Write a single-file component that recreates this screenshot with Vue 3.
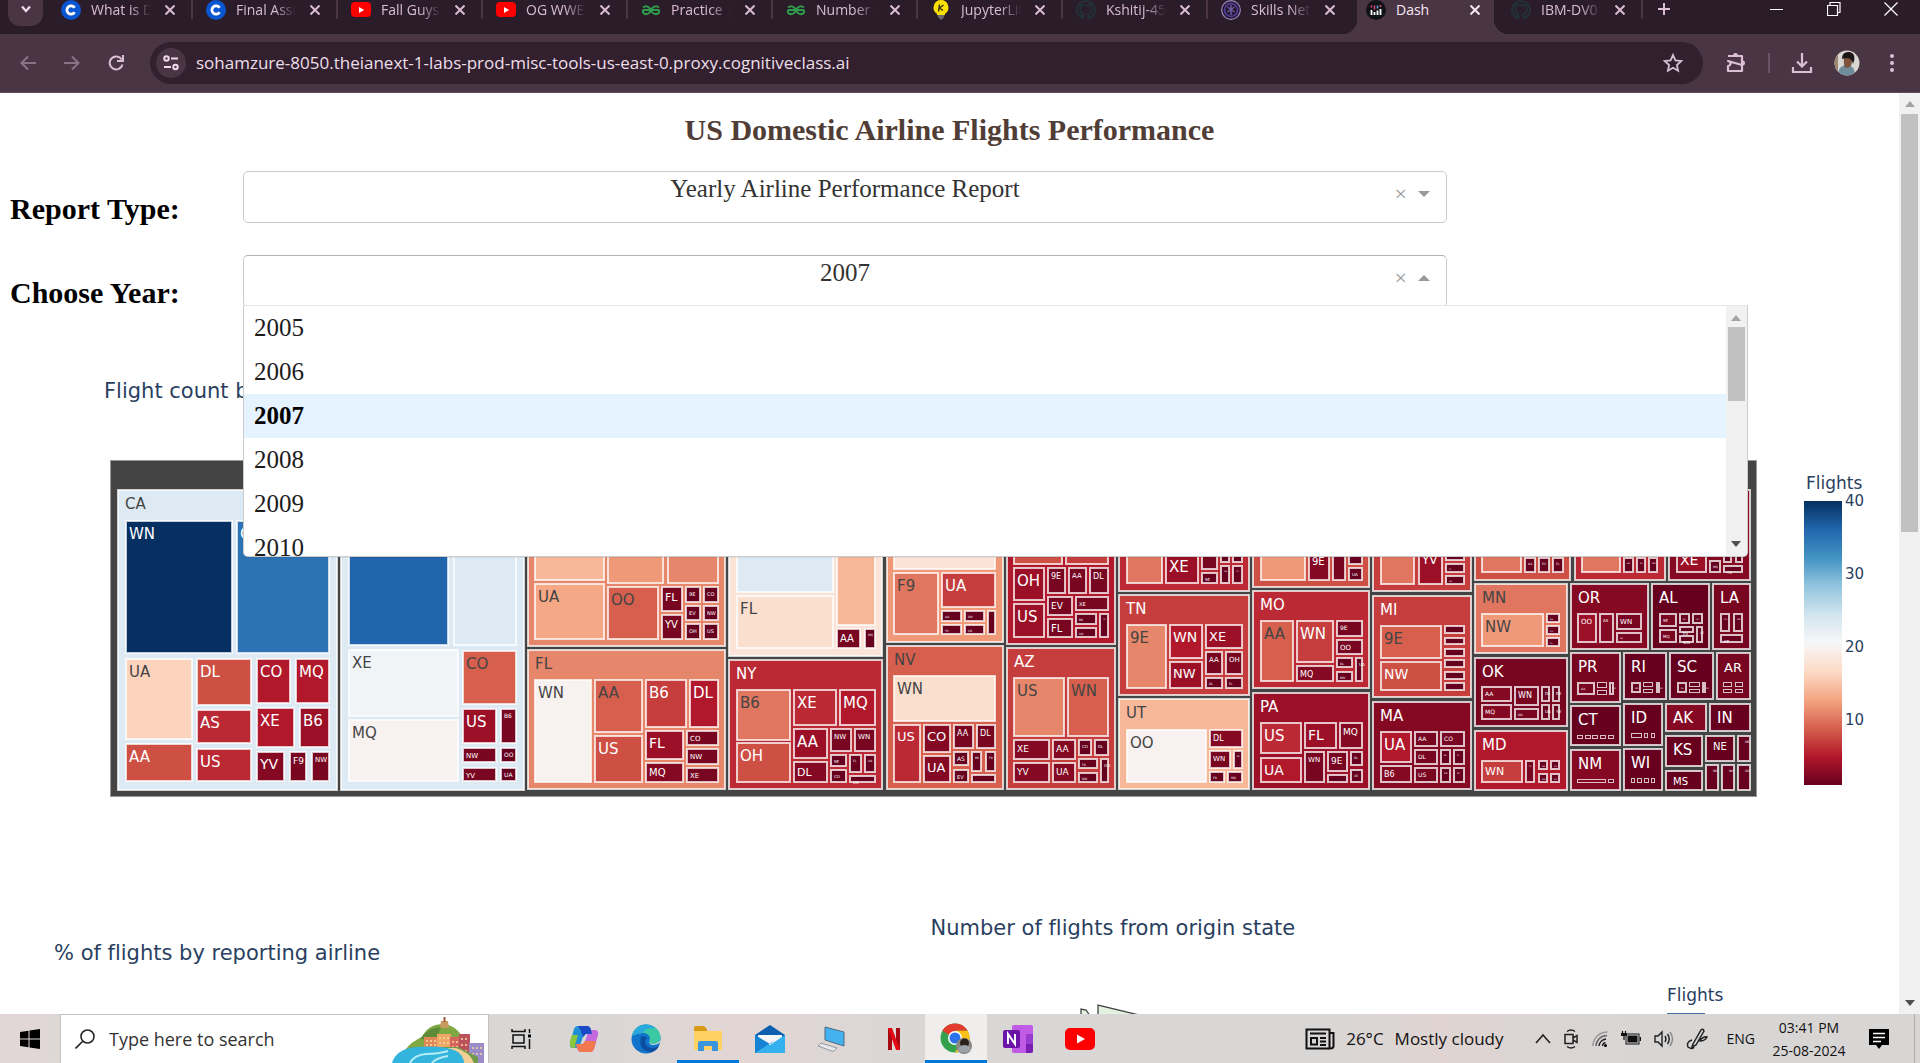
<script setup>
import { ref } from 'vue'

const tabs = [
  { title: 'What is Dash', icon: 'coursera' },
  { title: 'Final Assign', icon: 'coursera' },
  { title: 'Fall Guys -', icon: 'youtube' },
  { title: 'OG WWE', icon: 'youtube' },
  { title: 'Practice |', icon: 'gfg' },
  { title: 'Number of', icon: 'gfg' },
  { title: 'JupyterLite', icon: 'bulb' },
  { title: 'Kshitij-45', icon: 'github' },
  { title: 'Skills Net', icon: 'skills' },
  { title: 'Dash', icon: 'dash', active: true },
  { title: 'IBM-DV01', icon: 'github' }
]

const reportType = ref('Yearly Airline Performance Report')
const year = ref(2007)
const years = [2005, 2006, 2007, 2008, 2009, 2010]

const ticks = [40, 30, 20, 10]

const palette = {
  a: '#67001f', b: '#780621', c: '#850923', d: '#9c1027', e: '#b1182b', f: '#bb2a34',
  g: '#c53e3d', h: '#ce5045', i: '#d6604d', j: '#e0765f', k: '#e6866a', l: '#ef9979',
  m: '#f5a885', n: '#f7b799', o: '#fcd3bc', p: '#fbdfce', q: '#fbe3d7', r: '#f7f2f0',
  s: '#f0f4f6', t: '#deeaf3', u: '#2d73b3', v: '#2166ac', w: '#053061'
}
const isDark = (c) => 'ijklmnopqrst'.includes(c)

// State: [left, top, right, bottom, colour, label, airlines, label size]
// Airline: [left, top, right, bottom, colour, label, label size]
const states = [
  [117, 489, 338, 791, 't', 'CA', [
    [125, 520, 233, 654, 'w', 'WN'], [236, 520, 330, 654, 'u', 'OO'],
    [125, 658, 193, 740, 'o', 'UA'], [125, 743, 193, 782, 'h', 'AA'],
    [196, 658, 252, 706, 'h', 'DL'], [196, 709, 252, 744, 'f', 'AS'], [196, 748, 252, 782, 'f', 'US'],
    [256, 658, 291, 704, 'e', 'CO'], [295, 658, 330, 704, 'e', 'MQ'],
    [256, 707, 295, 748, 'e', 'XE'], [299, 707, 330, 748, 'd', 'B6'],
    [256, 751, 285, 782, 'c', 'YV', 14], [289, 751, 307, 782, 'b', 'F9', 9], [311, 751, 330, 782, 'b', 'NW', 7]]],
  [340, 489, 525, 791, 't', '', [
    [348, 520, 449, 646, 'v'], [453, 520, 517, 646, 't'],
    [348, 649, 459, 717, 's', 'XE'], [348, 719, 459, 782, 'r', 'MQ'],
    [462, 650, 517, 705, 'i', 'CO'], [462, 708, 497, 744, 'd', 'US'], [500, 708, 517, 744, 'b', 'B6', 6],
    [462, 747, 497, 763, 'b', 'NW', 7], [500, 747, 517, 763, 'a', 'OO', 6],
    [462, 767, 497, 782, 'b', 'YV', 7], [500, 767, 517, 782, 'a', 'UA', 6]]],
  [527, 489, 726, 647, 'k', '', [
    [534, 520, 605, 581, 'n'], [607, 520, 664, 584, 'l'], [667, 520, 719, 584, 'k'],
    [534, 583, 605, 640, 'm', 'UA'], [607, 586, 659, 640, 'i', 'OO'],
    [661, 586, 683, 612, 'b', 'FL', 11], [661, 614, 683, 640, 'b', 'YV', 10],
    [685, 586, 701, 603, 'a', '9E', 5], [703, 586, 719, 603, 'a', 'CO', 5],
    [685, 605, 701, 621, 'a', 'EV', 5], [703, 605, 719, 621, 'a', 'NW', 5],
    [685, 623, 701, 640, 'a', 'OH', 5], [703, 623, 719, 640, 'a', 'US', 5]]],
  [527, 649, 726, 790, 'k', 'FL', [
    [534, 679, 592, 783, 'r', 'WN'], [594, 679, 643, 733, 'i', 'AA'], [594, 735, 643, 783, 'h', 'US'],
    [645, 679, 687, 728, 'g', 'B6'], [689, 679, 719, 728, 'e', 'DL'],
    [645, 730, 684, 760, 'd', 'FL', 14], [645, 762, 684, 783, 'c', 'MQ', 10],
    [686, 730, 719, 746, 'b', 'CO', 7], [686, 748, 719, 765, 'b', 'NW', 7], [686, 767, 719, 783, 'b', 'XE', 7]]],
  [728, 489, 883, 657, 'q', '', [
    [736, 520, 834, 593, 't'], [836, 520, 876, 626, 'n'], [736, 595, 834, 649, 'p', 'FL'],
    [836, 628, 861, 649, 'b', 'AA', 10], [864, 628, 876, 649, 'a', 'MQ', 3]]],
  [728, 659, 883, 790, 'f', 'NY', [
    [736, 689, 791, 741, 'j', 'B6'], [736, 742, 791, 783, 'h', 'OH'],
    [793, 689, 837, 726, 'f', 'XE'], [839, 689, 876, 726, 'e', 'MQ'],
    [793, 728, 828, 759, 'd', 'AA'], [793, 761, 828, 783, 'c', 'DL', 11],
    [830, 728, 852, 752, 'b', 'NW', 7], [854, 728, 876, 752, 'b', 'WN', 7],
    [830, 754, 847, 767, 'a', '9E', 4], [830, 769, 847, 783, 'a', 'CO', 4],
    [849, 754, 862, 773, 'a', 'FL', 3], [864, 754, 876, 773, 'a', 'UA', 3], [849, 775, 876, 783, 'a', 'US', 4]]],
  [886, 489, 1004, 643, 'l', '', [
    [893, 520, 996, 570, 'q'], [893, 572, 939, 635, 'j', 'F9'], [941, 572, 996, 608, 'g', 'UA'],
    [941, 610, 962, 622, 'a', 'AA', 3], [964, 610, 985, 622, 'a', 'OO', 3], [987, 610, 996, 635, 'a'],
    [941, 624, 962, 635, 'a', 'YV', 3], [964, 624, 985, 635, 'a', 'US', 3]]],
  [886, 645, 1004, 790, 'i', 'NV', [
    [893, 675, 996, 722, 'p', 'WN'], [893, 724, 921, 783, 'f', 'US', 13],
    [923, 724, 951, 753, 'c', 'CO', 13], [923, 755, 951, 783, 'c', 'UA', 13],
    [953, 724, 974, 749, 'b', 'AA', 8], [976, 724, 996, 749, 'b', 'DL', 8],
    [953, 751, 969, 766, 'a', 'AS', 6], [953, 769, 969, 783, 'a', 'EV', 5],
    [971, 751, 982, 772, 'a', 'B6', 3], [985, 751, 996, 772, 'a', 'F9', 3], [971, 774, 996, 783, 'a']]],
  [1006, 489, 1116, 645, 'e', '', [
    [1013, 520, 1063, 565, 'h'], [1065, 520, 1109, 565, 'g'],
    [1013, 567, 1045, 601, 'd', 'OH'], [1013, 603, 1045, 638, 'd', 'US'],
    [1047, 567, 1066, 594, 'b', '9E', 8], [1068, 567, 1087, 594, 'b', 'AA', 7], [1089, 567, 1109, 594, 'b', 'DL', 8],
    [1047, 596, 1073, 616, 'b', 'EV', 9], [1047, 618, 1073, 638, 'b', 'FL', 10],
    [1075, 596, 1109, 611, 'b', 'XE', 5], [1075, 613, 1097, 625, 'a', 'B6', 3],
    [1075, 627, 1097, 638, 'a', 'UA', 3], [1099, 613, 1109, 638, 'a', 'YV', 2]]],
  [1006, 647, 1116, 790, 'g', 'AZ', [
    [1013, 677, 1065, 737, 'k', 'US'], [1067, 677, 1109, 737, 'i', 'WN'],
    [1013, 739, 1050, 760, 'c', 'XE', 9], [1013, 762, 1050, 783, 'c', 'YV', 9],
    [1052, 739, 1076, 760, 'c', 'AA', 9], [1052, 762, 1076, 783, 'c', 'UA', 9],
    [1078, 739, 1092, 756, 'a', 'CO', 4], [1094, 739, 1109, 756, 'a', 'DL', 4],
    [1078, 758, 1098, 769, 'a', 'F9', 3], [1078, 772, 1098, 783, 'a', 'NW', 3], [1100, 758, 1109, 783, 'a', 'OO', 4]]],
  [1118, 489, 1250, 592, 'f', '', [
    [1126, 520, 1163, 584, 'j'], [1165, 553, 1199, 584, 'd', 'XE'],
    [1201, 540, 1218, 570, 'b'], [1201, 572, 1218, 584, 'a', '9E', 4],
    [1220, 540, 1230, 563, 'a'], [1232, 540, 1243, 563, 'a'],
    [1220, 565, 1230, 584, 'a', 'UA', 2], [1232, 565, 1243, 584, 'a', 'YV', 2]]],
  [1118, 594, 1250, 696, 'g', 'TN', [
    [1126, 624, 1167, 689, 'k', '9E'], [1169, 624, 1203, 659, 'e', 'WN', 14], [1169, 661, 1203, 689, 'd', 'NW', 13],
    [1205, 624, 1243, 649, 'd', 'XE', 13], [1205, 651, 1223, 675, 'b', 'AA', 7], [1225, 651, 1243, 675, 'b', 'OH', 7],
    [1205, 677, 1223, 689, 'a', 'DL', 3], [1225, 677, 1243, 689, 'a', 'FL', 3]]],
  [1118, 698, 1250, 790, 'n', 'UT', [
    [1126, 729, 1207, 783, 'r', 'OO'], [1209, 729, 1243, 748, 'c', 'DL', 8],
    [1209, 750, 1231, 769, 'b', 'WN', 7], [1233, 750, 1243, 769, 'a', 'B6', 2],
    [1209, 771, 1225, 783, 'a', 'F9', 3], [1227, 771, 1243, 783, 'a', 'MQ', 3]]],
  [1252, 489, 1370, 588, 'h', '', [
    [1260, 520, 1306, 581, 'l'], [1308, 551, 1330, 581, 'c', '9E', 10], [1332, 540, 1346, 581, 'b'],
    [1348, 540, 1363, 565, 'a'], [1348, 567, 1363, 581, 'a', 'UA', 4]]],
  [1252, 590, 1370, 689, 'f', 'MO', [
    [1260, 620, 1294, 682, 'i', 'AA'], [1296, 620, 1334, 663, 'g', 'WN'], [1296, 665, 1334, 682, 'c', 'MQ', 8],
    [1336, 620, 1363, 637, 'b', '9E', 6], [1336, 639, 1363, 655, 'b', 'OO', 7],
    [1336, 657, 1353, 668, 'a', 'DL', 3], [1336, 671, 1353, 682, 'a', 'NW', 3], [1355, 657, 1363, 682, 'a', 'UA', 4]]],
  [1252, 692, 1370, 790, 'd', 'PA', [
    [1260, 722, 1302, 754, 'f', 'US'], [1260, 757, 1302, 783, 'e', 'UA', 14],
    [1304, 722, 1337, 749, 'd', 'FL', 14], [1339, 722, 1363, 749, 'c', 'MQ', 9],
    [1304, 751, 1325, 783, 'b', 'WN', 7], [1327, 751, 1348, 772, 'b', '9E', 9], [1327, 774, 1348, 783, 'a'],
    [1350, 751, 1363, 766, 'a', 'DL', 3], [1350, 769, 1363, 783, 'a', 'XE', 3]]],
  [1372, 489, 1472, 592, 'g', '', [
    [1380, 520, 1415, 585, 'j'], [1418, 548, 1443, 585, 'd', 'YV', 12],
    [1445, 545, 1465, 561, 'a'], [1445, 563, 1465, 573, 'a', 'FL', 2], [1445, 575, 1465, 585, 'a', 'UA', 2]]],
  [1372, 595, 1472, 698, 'g', 'MI', [
    [1380, 625, 1442, 659, 'i', '9E'], [1380, 661, 1442, 691, 'h', 'NW', 14],
    [1444, 625, 1465, 634, 'a'], [1444, 637, 1465, 645, 'a'], [1444, 648, 1465, 657, 'a'],
    [1444, 659, 1465, 668, 'a'], [1444, 671, 1465, 680, 'a'], [1444, 682, 1465, 691, 'a']]],
  [1372, 701, 1472, 790, 'c', 'MA', [
    [1380, 731, 1412, 763, 'e', 'UA'], [1380, 765, 1412, 783, 'c', 'B6', 8],
    [1414, 731, 1438, 747, 'b', 'AA', 6], [1440, 731, 1465, 747, 'b', 'CO', 6],
    [1414, 749, 1438, 765, 'b', 'DL', 6], [1440, 749, 1451, 765, 'a', 'B6', 2], [1453, 749, 1465, 765, 'a', 'FL', 2],
    [1414, 767, 1438, 783, 'b', 'US', 6], [1440, 767, 1451, 783, 'a', 'NW', 2], [1453, 767, 1465, 783, 'a', 'XE', 2]]],
  [1474, 489, 1571, 581, 'h', '', [
    [1481, 520, 1522, 573, 'j'], [1524, 557, 1536, 573, 'a', 'AA', 3], [1538, 557, 1550, 573, 'a', 'EV', 3], [1552, 557, 1564, 573, 'a', 'FL', 3]]],
  [1574, 489, 1666, 581, 'f', '', [
    [1581, 520, 1621, 573, 'j'], [1623, 557, 1634, 573, 'a', 'AA', 2], [1636, 557, 1646, 573, 'a', 'DL', 2], [1648, 557, 1658, 573, 'a', 'WN', 2]]],
  [1668, 489, 1751, 581, 'c', '', [
    [1676, 547, 1707, 573, 'd', 'XE', 14], [1709, 560, 1721, 573, 'a', 'MQ', 3],
    [1723, 550, 1732, 563, 'a'], [1735, 550, 1743, 563, 'a'], [1723, 565, 1743, 573, 'a', 'YV', 4]]],
  [1474, 583, 1568, 654, 'j', 'MN', [
    [1481, 613, 1544, 647, 'l', 'NW'], [1546, 613, 1560, 623, 'a', 'AA', 2],
    [1546, 625, 1560, 635, 'a', 'CO', 2], [1546, 637, 1560, 647, 'a', 'FL', 2]]],
  [1570, 583, 1649, 650, 'c', 'OR', [
    [1577, 613, 1597, 643, 'd', 'OO', 7], [1599, 613, 1614, 643, 'c', 'AS', 4],
    [1616, 613, 1642, 630, 'b', 'WN', 7], [1616, 632, 1642, 643, 'b', 'UA', 2]]],
  [1651, 583, 1710, 650, 'a', 'AL', [
    [1659, 613, 1677, 627, 'b', '9E', 4], [1659, 629, 1677, 643, 'b', 'MQ', 4],
    [1679, 613, 1690, 624, 'a', 'DL', 2], [1692, 613, 1703, 624, 'a', 'OH', 2],
    [1679, 626, 1694, 633, 'a', 'EV', 4], [1679, 635, 1694, 643, 'a', 'WN', 4], [1696, 626, 1703, 643, 'a', 'XE', 3]]],
  [1712, 583, 1751, 650, 'b', 'LA', [
    [1720, 613, 1730, 632, 'a', 'CO', 2], [1733, 613, 1743, 632, 'a', 'WN', 2], [1720, 634, 1743, 643, 'a', 'XE', 4]]],
  [1474, 657, 1568, 727, 'b', 'OK', [
    [1481, 686, 1512, 702, 'c', 'AA', 6], [1481, 704, 1512, 720, 'c', 'MQ', 6],
    [1514, 686, 1539, 706, 'b', 'WN', 8], [1514, 708, 1539, 720, 'b', 'OO', 3],
    [1541, 686, 1550, 702, 'a', 'DL', 4], [1552, 686, 1560, 702, 'a', 'EV', 4],
    [1541, 704, 1550, 720, 'a', 'UA', 4], [1552, 704, 1560, 720, 'a', 'YV', 4]]],
  [1474, 730, 1568, 791, 'e', 'MD', [
    [1481, 760, 1523, 783, 'g', 'WN', 11], [1525, 760, 1535, 783, 'b', 'FL', 2],
    [1538, 760, 1548, 770, 'a', 'AA', 2], [1550, 760, 1560, 770, 'a', 'CO', 2],
    [1538, 773, 1548, 783, 'a', 'NW', 2], [1550, 773, 1560, 783, 'a', 'US', 2]]],
  [1570, 652, 1621, 703, 'b', 'PR', [
    [1577, 682, 1595, 695, 'b', 'AA', 3], [1597, 682, 1607, 688, 'a'], [1597, 690, 1607, 695, 'a'], [1609, 682, 1614, 695, 'a', 'US', 2]]],
  [1623, 652, 1667, 700, 'a', 'RI', [
    [1631, 682, 1641, 693, 'a', 'WN', 2], [1643, 682, 1653, 687, 'a'], [1643, 689, 1653, 693, 'a'], [1656, 682, 1660, 693, 'a', 'US', 2]]],
  [1669, 652, 1714, 700, 'a', 'SC', [
    [1677, 682, 1687, 693, 'a', 'DL', 2], [1689, 682, 1700, 687, 'a'], [1689, 689, 1700, 693, 'a'], [1702, 682, 1706, 693, 'a', 'US', 2]]],
  [1716, 652, 1751, 700, 'b', 'AR', [
    [1723, 682, 1732, 687, 'a'], [1735, 682, 1743, 687, 'a'], [1723, 689, 1732, 693, 'a'], [1735, 689, 1743, 693, 'a']], 13],
  [1570, 705, 1621, 746, 'a', 'CT', [
    [1577, 735, 1583, 739, 'a'], [1585, 735, 1591, 739, 'a'], [1592, 735, 1598, 739, 'a'], [1600, 735, 1606, 739, 'a'], [1608, 735, 1614, 739, 'a']]],
  [1570, 749, 1621, 791, 'c', 'NM', [[1577, 779, 1606, 783, 'c'], [1608, 779, 1614, 783, 'a']]],
  [1623, 703, 1663, 746, 'a', 'ID', [[1631, 733, 1642, 738, 'a'], [1644, 733, 1648, 738, 'a'], [1651, 733, 1655, 738, 'a']]],
  [1623, 748, 1663, 791, 'a', 'WI', [
    [1631, 778, 1635, 783, 'a'], [1637, 778, 1642, 783, 'a'], [1644, 778, 1649, 783, 'a'], [1651, 778, 1655, 783, 'a']]],
  [1665, 703, 1707, 732, 'c', 'AK', []],
  [1709, 703, 1751, 732, 'a', 'IN', []],
  [1665, 735, 1703, 767, 'a', 'KS', []],
  [1665, 770, 1703, 791, 'a', 'MS', [], 10],
  [1705, 735, 1735, 762, 'a', 'NE', [], 10],
  [1737, 735, 1751, 762, 'a', 'ME', [], 3],
  [1705, 764, 1719, 791, 'a', 'ND', [], 3],
  [1721, 764, 1735, 791, 'a', 'NH', [], 3],
  [1737, 764, 1751, 791, 'a', 'SD', [], 3]
]

function tile(r, depth) {
  const size = (depth ? r[6] : r[7]) || 15
  const line = r[3] - r[1] < 7 ? 1 : 2
  return {
    x: r[0] + line / 2, y: r[1] + line / 2, w: r[2] - r[0] - line, h: r[3] - r[1] - line, line,
    fill: palette[r[4]], label: r[5], size, dark: isDark(r[4]),
    tx: r[0] + (depth ? 4 : 8),
    ty: r[1] + (depth ? 5 + size * 0.9 : size > 10 ? 20 : 5 + size)
  }
}
const tiles = states.flatMap((s) => [tile(s, 0), ...s[6].map((c) => tile(c, 1))])
</script>

<template>
  <div class="screen">
    <header class="tabstrip">
      <button class="tab-search" aria-label="Search tabs">
        <svg width="12" height="8" viewBox="0 0 12 8"><path d="M2 1.500 6 6l4-4.500" fill="none" stroke="#f0dcec" stroke-width="2.200" /></svg>
      </button>
      <div class="tabs">
        <div v-for="(t, i) in tabs" :key="i" class="tab" :class="{ active: t.active, before: i === 8 }">
          <svg class="favicon" width="20" height="20" viewBox="0 0 20 20">
            <template v-if="t.icon === 'coursera'">
              <circle cx="10" cy="10" r="10" fill="#0a56d1" />
              <path d="M13.600 7.700A4.200 4.200 0 1 0 13.600 12.300" fill="none" stroke="#fff" stroke-width="2.800" />
            </template>
            <template v-else-if="t.icon === 'youtube'">
              <rect x="0" y="2" width="20" height="15" rx="4" fill="#f00" />
              <path d="M8 7v6l5.200-3z" fill="#fff" />
            </template>
            <template v-else-if="t.icon === 'gfg'">
              <g fill="none" stroke="#2f9b4c" stroke-width="2">
                <path d="M2 7.500Q5 5 8 7.500T8 13Q4.500 15.500 2 12.500 1.500 10 3 10H17Q18.500 10 18 12.500 15.500 15.500 12 13T12 7.500Q15 5 18 7.500" />
              </g>
            </template>
            <template v-else-if="t.icon === 'bulb'">
              <path d="M10 0a7.500 7.500 0 0 0-4 13.800V15h8v-1.200A7.500 7.500 0 0 0 10 0z" fill="#fbe100" />
              <path d="M6.500 15h7l-1 3-2.500 2-2.500-2z" fill="#6a6a6a" />
              <path d="M8.500 4.500l-1 7M12.500 5l-4 3 3.500 2.500" fill="none" stroke="#3b3415" stroke-width="1.500" />
            </template>
            <template v-else-if="t.icon === 'github'">
              <path d="M10 1a9 9 0 0 0-3 17.500c.5 0 .6-.2.600-.5V16c-3 .5-3.500-1.500-3.500-1.500M12.800 18.500c-.3 0-.4-.2-.4-.5v-2.500c0-.8-.3-1.400-.6-1.600 2-.3 4-1 4-4.500 0-1-.3-1.800-.9-2.400.1-.3.400-1.200-.1-2.500 0 0-.8-.2-2.500 1a8 8 0 0 0-4.600 0C6 4.300 5.200 4.500 5.200 4.500c-.5 1.300-.2 2.200-.1 2.500A9 9 0 0 0 4.200 9.400c0 3.500 2 4.200 4 4.500M10 1a9 9 0 0 1 3 17.500" fill="none" stroke="#233036" stroke-width="2" />
            </template>
            <template v-else-if="t.icon === 'skills'">
              <circle cx="10" cy="10" r="9.300" fill="#241a2e" stroke="#9a86c0" stroke-width="1.200" />
              <circle cx="10" cy="10" r="6.500" fill="none" stroke="#5b3fa6" stroke-width="1.400" />
              <path d="M10 5v10M6.500 7l7 5M13.500 7l-7 5" stroke="#6f5aa6" stroke-width="1.400" />
            </template>
            <template v-else>
              <circle cx="10" cy="10" r="10" fill="#111316" />
              <path d="M5.500 10v5M8.500 12v3M11.500 10.500v4.500M14.500 9v6" stroke="#fff" stroke-width="1.800" />
              <path d="M5.500 5.500v2M8.500 5.500v4M14.500 5v2" stroke="#d64a7c" stroke-width="1.500" />
              <path d="M11.500 5.500v3" stroke="#5aa9e0" stroke-width="1.500" />
            </template>
          </svg>
          <span class="tab-title">{{ t.title }}</span>
          <button class="tab-close" :aria-label="'Close ' + t.title">
            <svg width="10" height="10" viewBox="0 0 10 10"><path d="M.5.500l9 9M9.500.500l-9 9" stroke="currentColor" stroke-width="2" /></svg>
          </button>
        </div>
      </div>
      <button class="new-tab" aria-label="New tab">
        <svg width="14" height="14" viewBox="0 0 14 14"><path d="M7 1v12M1 7h12" stroke="#dcbfd5" stroke-width="2" /></svg>
      </button>
      <div class="window-buttons">
        <button aria-label="Minimize"><svg width="14" height="14" viewBox="0 0 14 14"><path d="M0 7.500h13" stroke="#fff" /></svg></button>
        <button aria-label="Restore"><svg width="14" height="14" viewBox="0 0 14 14"><path d="M.5 3.500h10v10H.5zM3 3.500V.5h10v10h-2.500" fill="none" stroke="#fff" stroke-width="1.200" /></svg></button>
        <button aria-label="Close"><svg width="14" height="14" viewBox="0 0 14 14"><path d="M.5.5l13 13M13.500.5l-13 13" stroke="#fff" stroke-width="1.200" /></svg></button>
      </div>
    </header>

    <nav class="toolbar">
      <button class="nav-button" aria-label="Back"><svg width="16" height="16" viewBox="0 0 16 16"><path d="M16 8H2M8 1.500 1.500 8 8 14.500" fill="none" stroke="#8b7386" stroke-width="2" /></svg></button>
      <button class="nav-button" aria-label="Forward"><svg width="16" height="16" viewBox="0 0 16 16"><path d="M0 8h14M8 1.500 14.500 8 8 14.500" fill="none" stroke="#8b7386" stroke-width="2" /></svg></button>
      <button class="nav-button" aria-label="Reload"><svg width="16" height="16" viewBox="0 0 16 16"><path d="M13.700 4.500A6.500 6.500 0 1 0 14.500 9.500M15 0v6H9" fill="none" stroke="#dcbfd5" stroke-width="2" /></svg></button>
      <div class="omnibox">
        <button class="site-info" aria-label="Site information">
          <svg width="16" height="16" viewBox="0 0 16 16"><g fill="none" stroke="#f0dcec" stroke-width="2"><circle cx="3.500" cy="3.500" r="2.200" /><path d="M8 3.500h7" /><circle cx="12.500" cy="12" r="2.200" /><path d="M1 12h7" /></g></svg>
        </button>
        <input class="url" type="text" aria-label="Address" value="sohamzure-8050.theianext-1-labs-prod-misc-tools-us-east-0.proxy.cognitiveclass.ai" />
        <button aria-label="Bookmark">
          <svg width="20" height="20" viewBox="0 0 20 20"><path d="M10 2l2.400 5.400 5.900.6-4.400 4 1.200 5.800L10 14.800l-5.100 3 1.200-5.800-4.400-4 5.900-.6z" fill="none" stroke="#d6bfd1" stroke-width="1.800" /></svg>
        </button>
      </div>
      <div class="toolbar-right">
        <button aria-label="Extensions">
          <svg width="22" height="22" viewBox="0 0 22 22"><path d="M3 4h14v5M17 13v6H3v-5q2.500-.5 2.500-2.500T3 9z" fill="none" stroke="#dcbfd5" stroke-width="2.200" stroke-linejoin="round" /><path d="M17 8v6" stroke="#dcbfd5" stroke-width="2.200" /><path d="M8 3.500a2.500 2.500 0 0 1 5 0zM17.500 8.500a2.500 2.500 0 0 1 0 5z" fill="#dcbfd5" /></svg>
        </button>
        <span class="toolbar-rule"></span>
        <button aria-label="Downloads">
          <svg width="22" height="22" viewBox="0 0 22 22"><path d="M11 1v13M6 9.500l5 5 5-5M2 15v5h18v-5" fill="none" stroke="#dcbfd5" stroke-width="2.200" /></svg>
        </button>
        <button aria-label="Profile">
          <svg width="26" height="26" viewBox="0 0 26 26">
            <clipPath id="face"><circle cx="13" cy="13" r="12.500" /></clipPath>
            <g clip-path="url(#face)">
              <rect width="26" height="26" fill="#d9d5d1" /><rect width="4" height="26" fill="#9c8672" />
              <path d="M4 26q0-11 9-11 8 0 8 11z" fill="#6f8c9c" />
              <path d="M10 8q8-3 8 3 0 6-5 7-4 0-3-10z" fill="#7d533c" /><path d="M8 9q0-8 8-7 7 2 3 12-1-5-5-6-3 0-6 1z" fill="#1c1715" />
            </g>
          </svg>
        </button>
        <button class="more" aria-label="Menu">
          <svg width="6" height="20" viewBox="0 0 6 20"><g fill="#dcbfd5"><circle cx="3" cy="3" r="2" /><circle cx="3" cy="10" r="2" /><circle cx="3" cy="17" r="2" /></g></svg>
        </button>
      </div>
    </nav>

    <div class="viewport">
      <main class="page">
        <h1>US Domestic Airline Flights Performance</h1>

        <div class="form">
          <div class="form-row">
            <label for="report-type">Report Type:</label>
            <div class="field">
              <div class="control">
                <select id="report-type" v-model="reportType">
                  <option>Yearly Airline Performance Report</option>
                </select>
                <div class="control-icons">
                  <button class="clear" aria-label="Clear report type">×</button>
                  <svg width="12" height="6" viewBox="0 0 12 6"><path d="M0 0h12L6 6z" fill="#999" /></svg>
                </div>
              </div>
            </div>
          </div>
          <div class="form-row">
            <label for="year">Choose Year:</label>
            <div class="field">
              <div class="control open">
                <select id="year" v-model="year">
                  <option v-for="y in years" :key="y" :value="y">{{ y }}</option>
                </select>
                <div class="control-icons">
                  <button class="clear" aria-label="Clear year">×</button>
                  <svg width="12" height="6" viewBox="0 0 12 6"><path d="M0 6h12L6 0z" fill="#999" /></svg>
                </div>
              </div>
              <div class="menu">
                <ul role="listbox" aria-label="Year">
                  <li v-for="y in years" :key="y" role="option" :aria-selected="y === year" :class="{ selected: y === year }">{{ y }}</li>
                </ul>
                <div class="scrollbar menu-scroll">
                  <svg width="10" height="6" viewBox="0 0 10 6"><path d="M0 6h10L5 0z" fill="#a3a3a3" /></svg>
                  <span class="thumb"></span>
                  <svg class="down" width="10" height="6" viewBox="0 0 10 6"><path d="M0 0h10L5 6z" fill="#505050" /></svg>
                </div>
              </div>
            </div>
          </div>
        </div>

        <section class="chart">
          <h2 class="treemap-title">Flight count by airline to destination state</h2>
          <div class="treemap-row">
            <svg class="treemap" viewBox="110 460 1647 337">
              <rect x="110.500" y="460.500" width="1646" height="336" fill="#444" stroke="#999" />
              <g v-for="(t, i) in tiles" :key="i">
                <rect :x="t.x" :y="t.y" :width="t.w" :height="t.h" :fill="t.fill" :stroke-width="t.line" class="tile" />
                <text v-if="t.label" :x="t.tx" :y="t.ty" :font-size="t.size" :class="t.dark ? 'on-light' : 'on-dark'">{{ t.label }}</text>
              </g>
            </svg>
            <div class="legend">
              <div class="legend-title">Flights</div>
              <div class="scale">
                <div class="bar"></div>
                <div class="ticks"><span v-for="t in ticks" :key="t">{{ t }}</span></div>
              </div>
            </div>
          </div>
        </section>

        <div class="lower">
          <section class="pie"><h2>% of flights by reporting airline</h2></section>
          <section class="map">
            <h2>Number of flights from origin state</h2>
            <div class="map-row">
              <svg class="shape" width="62" height="20" viewBox="0 0 62 20"><path d="M4 20V6l5 1 9 13M21 20V2l41 10v8" fill="#e2f2df" stroke="#444" stroke-width="1.300" /></svg>
              <div class="map-legend">
                <div class="legend-title">Flights</div>
                <div class="bar"></div>
              </div>
            </div>
          </section>
        </div>
      </main>
      <div class="scrollbar page-scroll">
        <svg width="10" height="6" viewBox="0 0 10 6"><path d="M0 6h10L5 0z" fill="#a3a3a3" /></svg>
        <span class="thumb"></span>
        <svg class="down" width="10" height="6" viewBox="0 0 10 6"><path d="M0 0h10L5 6z" fill="#505050" /></svg>
      </div>
    </div>

    <footer class="taskbar">
      <button class="start" aria-label="Start">
        <svg width="20" height="20" viewBox="0 0 20 20"><path d="M0 3l8.500-1.200v7.700H0zM9.500 1.600 20 0v9.500H9.500zM0 10.500h8.500v7.700L0 17zM9.500 10.500H20V20L9.500 18.400z" /></svg>
      </button>
      <div class="search">
        <svg width="20" height="20" viewBox="0 0 20 20"><circle cx="12.500" cy="7.500" r="6.500" fill="none" stroke="#222" stroke-width="1.600" /><path d="M8 12 .5 19.500" stroke="#222" stroke-width="1.600" /></svg>
        <input type="text" aria-label="Search" placeholder="Type here to search" />
        <svg class="art" width="92" height="46" viewBox="0 0 92 46">
          <path d="M12 34Q20 24 30 20q6-13 22-13 16 2 22 22l10 8z" fill="#7fa843" />
          <path d="M28 22q8-12 22-12-6 8-4 14z" fill="#5c8c38" />
          <path d="M49 4h7l1 7h-9z" fill="#c79a62" /><path d="M52.500 0v5" stroke="#a05a3a" stroke-width="2" />
          <rect x="32" y="20" width="16" height="12" fill="#e08855" /><rect x="45" y="17" width="14" height="15" fill="#f0a765" />
          <rect x="58" y="20" width="13" height="16" fill="#d4645c" /><rect x="67" y="17" width="11" height="24" fill="#b9525a" /><rect x="77" y="26" width="15" height="20" fill="#9a8cc8" />
          <path d="M34 24h12M34 28h12M47 21h10M47 26h10M60 25h8M60 30h8M69 22h8M69 28h8M69 34h8M80 31h10M80 37h10" stroke="#fbd9a0" stroke-width="1.500" stroke-dasharray="2 2" />
          <path d="M18 30h48l20 10v6H20z" fill="#6f9a4a" />
          <path d="M30 31h34q14 4 18 15H60z" fill="#f2cf95" />
          <path d="M0 46Q4 32 24 30q30-2 42 5 6 5 6 11z" fill="#33b4dc" /><path d="M18 46q4-8 16-9 12 0 22-3M40 46q4-5 16-7" stroke="#b6ecf6" stroke-width="2" fill="none" />
        </svg>
      </div>
      <div class="apps">
        <button aria-label="Task view"><svg width="22" height="20" viewBox="0 0 22 20"><path d="M1 0v2.500h13V0M2 6h11v8H2zM1 20v-2.500h13V20M18.500 0v4M18.500 10v10" fill="none" stroke="#111" stroke-width="1.500" /><rect x="17" y="5.500" width="3" height="3" /></svg></button>
        <button aria-label="Copilot">
          <svg width="30" height="28" viewBox="0 0 30 28">
            <path d="M9 1h9q3 0 4 4l1 4h-6q-2 0-3 3l-3 8q-1 3-4 3H4q-4 0-3-5L5 4q1-3 4-3z" fill="#1f8fd6" /><path d="M1 16l2-6h6l-3 10q2 3-2 3-4 0-3-7z" fill="#8cc63f" />
            <path d="M21 27h-9q-3 0-4-4l-1-4h6q2 0 3-3l3-8q1-3 4-3h3q4 0 3 5l-4 14q-1 3-4 3z" fill="#c567dd" /><path d="M8 23l-1-4h6q2 0 3-3h11l-2 8q-1 3-4 3h-9q-3 0-4-4z" fill="#f2794f" /><path d="M9 1h9q3 0 4 4l1 4h-6l-3 3-3-8z" fill="#1a49c8" />
          </svg>
        </button>
        <button aria-label="Edge">
          <svg width="30" height="30" viewBox="0 0 30 30"><circle cx="15" cy="15" r="14.500" fill="#1173c9" /><path d="M1 12Q4 0 15.500.5 29 2 29.500 14q-1 6-8 6-4 0-3-3 2-6-5-8Q6 8 1 12z" fill="#3bc9a4" /><path d="M1 12Q4 0 15.500.5q5 0 9 4-10-1-14 5-5 0-9.500 2.500z" fill="#2aa9dc" /><path d="M10 13q-3 13 9 15 6 0 9-6-7 4-12 0-4-4 0-8-3-3-6-1z" fill="#0b4ea0" /><path d="M18.500 17q-1 3 3 4 5 0 8-3v-2q-3 4-8 4-3 0-3-3z" fill="#dbd9d8" /></svg>
        </button>
        <button class="running" aria-label="File Explorer">
          <svg width="28" height="26" viewBox="0 0 28 26"><path d="M0 2q0-2 2-2h8l3 3v3H0z" fill="#d99a17" /><path d="M0 5h28v19H0z" fill="#ffd262" /><path d="M4 25v-8q0-2 2-2h16q2 0 2 2v8h-6v-5h-8v5z" fill="#3a95dc" /></svg>
        </button>
        <button aria-label="Mail"><svg width="30" height="28" viewBox="0 0 30 28"><path d="M0 10 15 0l15 10v4H0z" fill="#0b5fae" /><path d="M3 10h24v10H3z" fill="#f4f6f8" /><path d="M0 10l15 10 15-10v18H0z" fill="#35b0ee" /><path d="M0 10v18l20-13-5 4z" fill="#1583d2" /></svg></button>
        <button aria-label="This PC"><svg width="28" height="26" viewBox="0 0 28 26"><path d="M7 1l19 5v14L7 14z" fill="#44b2ef" stroke="#4f6b80" /><path d="M3 17l16 5-4 3.500L0 20z" fill="#e6e8ea" stroke="#7b858d" stroke-width=".8" /></svg></button>
        <button aria-label="Netflix"><svg width="12" height="22" viewBox="0 0 12 22"><path d="M0 0h4v22H0zM8 0h4v22H8z" fill="#a70a12" /><path d="M0 0h4l8 22H8z" fill="#e50914" /></svg></button>
        <button class="running current" aria-label="Chrome">
          <svg width="32" height="32" viewBox="0 0 32 32"><circle cx="15" cy="15" r="14.500" fill="#34a14c" /><path d="M2.400 7.700A14.500 14.500 0 0 1 27.600 7.700H15l-6 4z" fill="#e33b2e" /><path d="M27.600 7.700A14.500 14.500 0 0 1 15 29.500l6-11-6-10.800z" fill="#fbc116" /><circle cx="15" cy="15" r="7" fill="#fff" /><circle cx="15" cy="15" r="5.500" fill="#2b72e8" /><circle cx="24" cy="23" r="8" fill="#888783" /><circle cx="24.500" cy="20" r="4.500" fill="#2b211d" /><path d="M18 28q1-6 6-6t7 4q-5 6-13 2z" fill="#9ba3a6" /></svg>
        </button>
        <button aria-label="OneNote"><svg width="30" height="28" viewBox="0 0 30 28"><rect x="9" width="21" height="28" rx="2" fill="#c05be6" /><path d="M23 9h7v10h-7z" fill="#9a3bd0" /><path d="M23 19h7v7q0 2-2 2h-5z" fill="#7a1fb4" /><rect y="5" width="17" height="18" rx="2" fill="#6a14a8" /><path d="M5 19V9l7 10V9" stroke="#fff" stroke-width="2" fill="none" /></svg></button>
        <button aria-label="YouTube"><svg width="30" height="22" viewBox="0 0 30 22"><rect width="30" height="22" rx="5" fill="#f00" /><path d="M12 6.500v9l8-4.500z" fill="#fff" /></svg></button>
      </div>
      <div class="tray">
        <button class="weather">
          <svg width="30" height="22" viewBox="0 0 30 22"><path d="M1.500 1.500h23v19h-23zM25 5h3.500v13q0 2.500-3.500 2.500" fill="none" stroke="#111" stroke-width="2" /><path d="M5 5.500h16M15 10h6M15 13.500h6M15 17h6" stroke="#111" stroke-width="1.800" /><path d="M6 10h6v6.500H6z" fill="none" stroke="#111" stroke-width="2" /></svg>
          <span>26°C</span><span>Mostly cloudy</span>
        </button>
        <div class="tray-icons">
          <svg width="16" height="20" viewBox="0 0 16 20"><path d="M1 14l7-8 7 8" fill="none" stroke="#222" stroke-width="1.600" /></svg>
          <svg width="16" height="20" viewBox="0 0 16 20"><path d="M2 5.500h8v9H2zM10 9l4-2.500v7L10 11M4 2.500q4-3 8 0M4 17.500q4 3 8 0" fill="none" stroke="#222" stroke-width="1.500" /></svg>
          <svg width="16" height="20" viewBox="0 0 16 20"><g fill="none" stroke="#222" stroke-width="1.500"><path d="M10.500 17a4 4 0 0 1 3-3.500" /><path d="M7 17a8 8 0 0 1 7-7" /><path d="M4 17A11 11 0 0 1 15 6.500" stroke="#666" /><path d="M.8 17A14.500 14.500 0 0 1 15.500 3" stroke="#999" /></g><circle cx="13.500" cy="16.500" r="1.500" /></svg>
          <svg width="20" height="20" viewBox="0 0 20 20"><rect x="5" y="5" width="13" height="10" fill="none" stroke="#111" /><rect x="7" y="7" width="9" height="6" fill="#111" stroke="#111" /><path d="M19.500 8v4" stroke="#111" stroke-width="1.500" /><path d="M0 4h6v3H0z" fill="#111" /><path d="M1.500 2v3M4.500 2v3M3 6v5" stroke="#111" stroke-width="1.200" fill="none" /></svg>
          <svg width="20" height="20" viewBox="0 0 20 20"><path d="M1 7h3l4-4v14l-4-4H1zM11 7q2 3 0 6M13.500 5q3.500 5 0 10" fill="none" stroke="#222" stroke-width="1.400" /><path d="M16 3q5 7 0 14" fill="none" stroke="#888" stroke-width="1.400" /></svg>
          <svg width="22" height="22" viewBox="0 0 22 22"><path d="M7 16 15 2q2-2 3 1L10 17l-4 2zM6 12q-6 2-4 7 4 3 6 0M13 13q5-5 8-4-2 4-7 4" fill="none" stroke="#222" stroke-width="1.500" /></svg>
        </div>
        <span class="lang">ENG</span>
        <div class="clock"><span>03:41 PM</span><span>25-08-2024</span></div>
        <button class="notes" aria-label="Notifications">
          <svg width="20" height="20" viewBox="0 0 20 20"><path d="M0 0h20v16h-7l-3 4-3-4H0z" /><path d="M4 4.500h12M4 8.500h12M4 12.500h8" stroke="#fff" stroke-width="1.300" /></svg>
        </button>
      </div>
    </footer>
  </div>
</template>

<style>
body {
  margin: 0;
  overflow: hidden;
}
</style>

<style scoped>
* {
  box-sizing: border-box;
}
.screen {
  display: flex;
  flex-direction: column;
  height: 100vh;
  font-family: "Open Sans", "Noto Sans", sans-serif;
  background: #fff;
}
button {
  display: flex;
  align-items: center;
  justify-content: center;
  padding: 0;
  border: 0;
  background: none;
  color: inherit;
  font: inherit;
}
svg {
  display: block;
  flex: none;
}

/* tab strip */
.tabstrip {
  display: flex;
  flex: none;
  height: 34px;
  background: #2b1c29;
  color: #d9bcd3;
}
.tab-search {
  width: 35px;
  height: 26px;
  margin: 0 5px 0 8px;
  padding-bottom: 8px;
  border-radius: 0 0 12px 12px;
  background: #4a3545;
}
.tabs {
  display: flex;
}
.tab {
  position: relative;
  display: flex;
  align-items: center;
  width: 145px;
  height: 34px;
  padding: 0 18px 15px 13px;
}
.tab::after {
  content: "";
  position: absolute;
  top: 0;
  right: 0;
  width: 2px;
  height: 19px;
  background: #4a3545;
}
.tab.before::after {
  display: none;
}
.tab.active {
  width: 137px;
  margin: 0 4px;
  padding: 0 14px 15px 9px;
  background: #4a3545;
  color: #f6e8f2;
}
.tab.active::before,
.tab.active::after {
  content: "";
  position: absolute;
  top: 20px;
  width: 14px;
  height: 14px;
}
.tab.active::before {
  left: -14px;
  background: radial-gradient(circle at 0 0, #2b1c29 14px, #4a3545 14px);
}
.tab.active::after {
  right: -14px;
  background: radial-gradient(circle at 100% 0, #2b1c29 14px, #4a3545 14px);
}
.tab-title {
  flex: 1;
  margin: 0 14px 0 10px;
  overflow: hidden;
  white-space: nowrap;
  font-size: 14px;
  line-height: 20px;
  mask-image: linear-gradient(90deg, #000 65%, transparent);
}
.tab.active .tab-title {
  mask-image: none;
}
.new-tab {
  height: 18px;
  margin-left: 14px;
}
.window-buttons {
  display: flex;
  align-items: center;
  gap: 43px;
  height: 18px;
  margin-left: auto;
  margin-right: 22px;
}

/* toolbar */
.toolbar {
  display: flex;
  flex: none;
  align-items: center;
  height: 59px;
  padding-left: 6px;
  background: #4a3545;
  border-bottom: 1px solid #5f4b5a;
}
.nav-button {
  width: 44px;
  height: 40px;
}
.omnibox {
  display: flex;
  flex: 1;
  align-items: center;
  height: 42px;
  margin-left: 12px;
  padding: 0 20px 0 6px;
  border-radius: 21px;
  background: #33202f;
}
.site-info {
  width: 30px;
  height: 30px;
  border-radius: 15px;
  background: #4a3545;
}
.url {
  flex: 1;
  margin-left: 10px;
  padding: 0;
  border: 0;
  outline: 0;
  background: none;
  color: #eddfe9;
  font: 17px/24px "Open Sans", "Noto Sans", sans-serif;
}
.toolbar-right {
  display: flex;
  align-items: center;
  gap: 21px;
  margin-left: 22px;
  margin-right: 25px;
}
.more {
  margin-left: 8px;
}
.toolbar-rule {
  width: 2px;
  height: 20px;
  background: #6b5265;
}

/* scrollbars */
.scrollbar {
  display: flex;
  flex: none;
  flex-direction: column;
  align-items: center;
  width: 21px;
  background: #f1f1f1;
}
.thumb {
  width: 17px;
  background: #c1c1c1;
}
.down {
  margin-top: auto;
}
.page-scroll {
  padding: 8px 0;
}
.page-scroll .thumb {
  height: 418px;
  margin-top: 7px;
}
.menu-scroll {
  padding: 9px 0;
}
.menu-scroll .thumb {
  height: 74px;
  margin-top: 6px;
}

/* page */
.viewport {
  display: flex;
  flex: 1;
  min-height: 0;
}
.page {
  flex: 1;
  min-width: 0;
  overflow: hidden;
  padding-top: 19px;
  font-family: "Liberation Serif", serif;
}
h1 {
  margin: 0;
  color: #503d36;
  font-size: 30px;
  line-height: 36px;
  text-align: center;
}
.form {
  display: flex;
  flex-direction: column;
  gap: 32px;
  padding: 23px 8px 0 10px;
}
.form-row {
  display: flex;
  height: 52px;
}
label {
  width: 233px;
  padding-top: 20px;
  font-size: 30px;
  font-weight: bold;
  line-height: 36px;
}
.field {
  position: relative;
  width: 80%;
}
.control {
  position: relative;
  width: 80%;
  height: 52px;
}
select {
  appearance: none;
  width: 100%;
  height: 52px;
  padding: 0 0 18px;
  border: 1px solid #ccc;
  border-radius: 5px;
  background: #fff;
  color: #333;
  font: 25px "Liberation Serif", serif;
  text-align: center;
  text-align-last: center;
}
.open select {
  border-color: #b3b3b3 #ccc #ccc;
}
.control-icons {
  position: absolute;
  top: 12px;
  right: 17px;
  display: flex;
  align-items: center;
  gap: 10px;
  height: 22px;
  color: #999;
}
.clear {
  width: 14px;
  font-size: 22px;
  line-height: 22px;
}
.menu {
  position: absolute;
  top: 50px;
  left: 0;
  z-index: 2;
  display: flex;
  width: 100%;
  height: 252px;
  overflow: hidden;
  border: 1px solid #ccc;
  border-top-color: #e6e6e6;
  border-radius: 0 0 5px 5px;
  background: #fff;
  box-shadow: 0 1px 0 rgba(0, 0, 0, 0.06);
}
.menu ul {
  flex: 1;
  margin: 0;
  padding: 0;
  list-style: none;
}
.menu li {
  height: 44px;
  padding: 0 10px;
  color: #1c1c1c;
  font-size: 25px;
  line-height: 43px;
}
.menu li.selected {
  background: #e5f2ff;
  color: #000;
  font-weight: bold;
}

/* charts */
.chart,
.lower {
  font-family: "DejaVu Sans", sans-serif;
  font-variant-ligatures: none;
  color: #2a3f5f;
}
h2 {
  margin: 0;
  font-size: 21px;
  font-weight: normal;
  line-height: 27px;
}
.treemap-title {
  margin: 71px 0 0 104px;
}
.treemap-row {
  display: flex;
  margin-top: 55px;
  padding-left: 110px;
}
.treemap {
  flex: 1;
  min-width: 0;
  height: auto;
}
.tile {
  stroke: #fff;
  stroke-opacity: 0.75;
}
.treemap text {
  font-family: "DejaVu Sans", sans-serif;
}
.on-light {
  fill: #444;
}
.on-dark {
  fill: #fff;
}
.legend {
  width: 95px;
  margin-left: 47px;
  padding-top: 13px;
}
.legend-title {
  padding-left: 2px;
  font-size: 17px;
  line-height: 20px;
}
.scale {
  display: flex;
  gap: 3px;
  margin-top: 8px;
}
.bar {
  width: 38px;
  height: 284px;
  background: linear-gradient(#053061, #2166ac 10%, #4393c3 20%, #92c5de 30%, #d1e5f0 40%, #f7f7f7 50%, #fddbc7 60%, #f4a582 70%, #d6604d 80%, #b2182b 90%, #67001f);
}
.ticks {
  display: flex;
  flex-direction: column;
  gap: 55px;
  margin-top: -9px;
  font-size: 15px;
  line-height: 18px;
}
.lower {
  display: flex;
  margin-top: 118px;
}
.pie {
  width: 49%;
  padding: 25px 0 0 54px;
}
.map {
  flex: 1;
}
.map-row {
  display: flex;
  justify-content: space-between;
  padding: 43px 0 0 146px;
}
.shape {
  margin-top: 18px;
}
.map-legend {
  width: 232px;
}
.map-legend .legend-title {
  padding: 0 0 8px;
}
.map-legend .bar {
  background: #4470a4;
}

/* taskbar */
.taskbar {
  display: flex;
  flex: none;
  align-items: center;
  height: 49px;
  background: linear-gradient(90deg, #e1d7d6, #dad8d7 10%, #d9d7d6 30%, #e2d6d4 38%, #d8d7d6 50%, #d8d7d6 68%, #dfd4d2 75%, #d8d6d5 85%);
  color: #111;
  font-size: 17px;
}
.start {
  width: 60px;
  height: 49px;
}
.search {
  display: flex;
  align-items: center;
  width: 429px;
  height: 49px;
  padding-left: 14px;
  border: 1px solid #c4c2c1;
  border-bottom: 0;
  background: #fff;
}
.search input {
  flex: 1;
  min-width: 0;
  margin-left: 14px;
  padding: 0;
  border: 0;
  outline: 0;
  background: none;
  font: 18px/24px "Open Sans", "Noto Sans", sans-serif;
}
.search input::placeholder {
  color: #333;
}
.art {
  align-self: flex-end;
  margin-right: 4px;
}
.apps {
  display: flex;
  margin-left: 2px;
}
.apps button {
  width: 62px;
  height: 49px;
}
.apps .running {
  box-shadow: inset 0 -3px #0078d7;
}
.apps .current {
  background: #efeeed;
}
.tray {
  display: flex;
  align-items: center;
  height: 49px;
  margin-left: auto;
}
.weather {
  gap: 11px;
}
.tray-icons {
  display: flex;
  align-items: center;
  justify-content: space-between;
  width: 174px;
  margin-left: 31px;
}
.lang {
  margin-left: 18px;
  font-size: 14px;
}
.clock {
  display: flex;
  flex-direction: column;
  align-items: center;
  width: 78px;
  margin-left: 15px;
  font-size: 14px;
  line-height: 23px;
}
.notes {
  height: 49px;
  margin-left: 21px;
  margin-right: 5px;
  padding-right: 25px;
  border-right: 1px solid #aaa;
}
</style>
